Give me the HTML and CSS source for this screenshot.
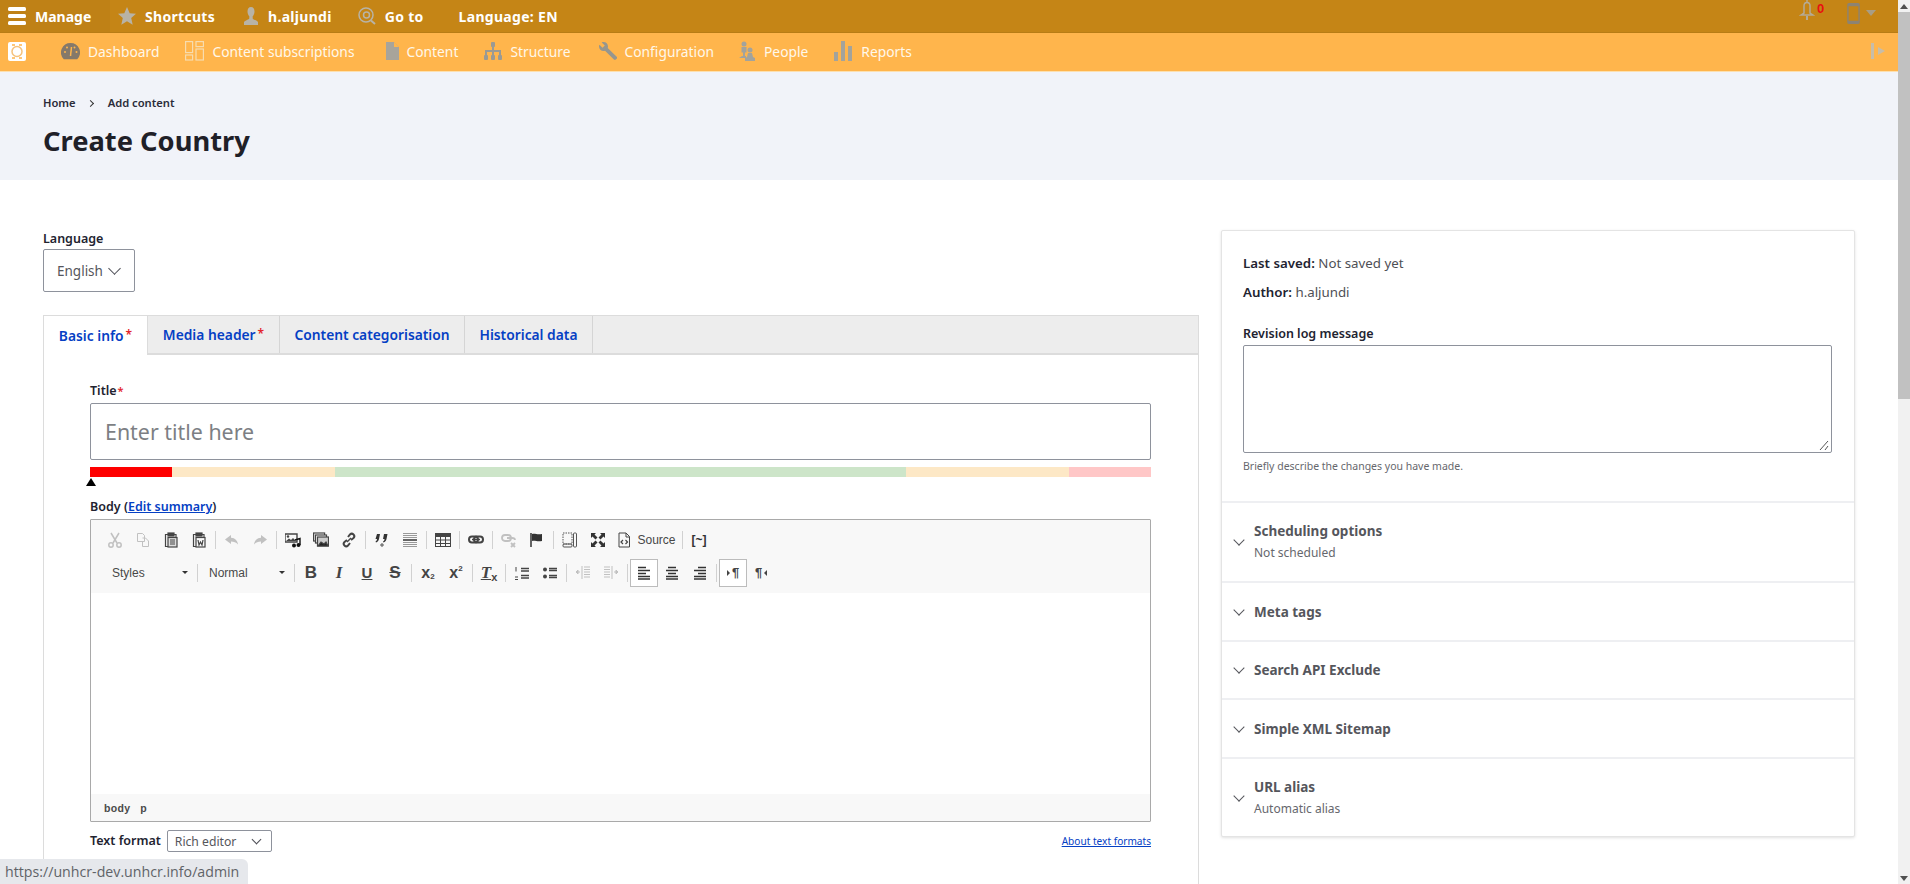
FILE: index.html
```html
<!DOCTYPE html>
<html lang="en">
<head>
    <meta charset="UTF-8">
    <meta name="viewport" content="width=device-width, initial-scale=1.0">
    <title>Create Country</title>
    <link rel="stylesheet" href="styles.css">
</head>
<body>
<div class="page">
    <div class="content">

        <!-- Toolbar superior -->
        <div class="topbar">
            <a class="top-item manage">
                <svg class="top-icon" viewBox="0 0 18 18"><rect y="0" width="18" height="4" rx="1.5" fill="#fff"/><rect y="7" width="18" height="4" rx="1.5" fill="#fff"/><rect y="14" width="18" height="4" rx="1.5" fill="#fff"/></svg>
                <span>Manage</span>
            </a>
            <a class="top-item shortcuts">
                <svg class="top-icon" viewBox="0 0 18 18"><path d="M9 0l2.7 6.2 6.3.6-4.8 4.3 1.5 6.7L9 14.2l-5.700 3.600 1.500-6.700L0 6.800l6.300-.6z" fill="#b8b3a6"/></svg>
                <span>Shortcuts</span>
            </a>
            <a class="top-item user">
                <svg class="top-icon" viewBox="0 0 18 18"><path d="M9 0c2.300 0 3.500 1.900 3.500 4.500 0 2-.9 3.800-1.800 4.800v2.200c0 1 4.300 1.800 5.300 3.500v3H2v-3c1-1.700 5.300-2.500 5.300-3.500V9.300C6.400 8.300 5.500 6.500 5.500 4.500 5.500 1.900 6.700 0 9 0z" fill="#b8b3a6"/></svg>
                <span>h.aljundi</span>
            </a>
            <a class="top-item goto">
                <svg class="top-icon" viewBox="0 0 18 18" fill="none" stroke="#b8b3a6"><circle cx="8" cy="8" r="7" stroke-width="1.500"/><circle cx="8.500" cy="8" r="3" stroke-width="1.500"/><path d="M13 13.500l4 3.500" stroke-width="2"/></svg>
                <span>Go to</span>
            </a>
            <a class="top-item lang"><span>Language: EN</span></a>
            <div class="top-right">
                <span class="bell">
                    <svg viewBox="0 0 16 20" width="16" height="20" fill="none" stroke="#b5ab97" stroke-width="1.500"><path d="M8 0v2.500M5 6c0-2 1-3.500 3-3.500S11 4 11 6v7l3 2H2l3-2z"/><path d="M8 16v4" stroke-width="2"/></svg>
                    <b class="bell-count">0</b>
                </span>
                <span class="device">
                    <svg viewBox="0 0 14 23" width="13" height="23" fill="none" stroke="#8c8373" stroke-width="1.500"><rect x="1" y="1" width="12" height="21" rx="1"/><path d="M1 2.500h12M1 20.500h12" stroke-width="2.500"/></svg>
                    <i class="device-arrow"></i>
                </span>
            </div>
        </div>

        <!-- Menu de administracion -->
        <div class="menubar">
            <span class="logo"><svg viewBox="0 0 18 19" width="18" height="19"><rect width="18" height="19" rx="2" fill="#fff"/><circle cx="9" cy="9.500" r="5" fill="none" stroke="#f5c27c" stroke-width="1.500"/><path d="M4 3h3M11 3h3M4 16h3M11 16h3" stroke="#ffb54c" stroke-width="1.500"/></svg></span>
            <a class="menu-item dash">
                <svg viewBox="0 0 19 18" width="19" height="18"><path d="M9.500 1a9.500 9.500 0 0 0-6.700 16.200h13.400A9.500 9.500 0 0 0 9.500 1z" fill="#85796a"/><path d="M9.500 14l1-9" stroke="#ffb54c" stroke-width="1.500"/><circle cx="4" cy="10" r="1" fill="#ffb54c"/><circle cx="6" cy="5.500" r="1" fill="#ffb54c"/><circle cx="13.500" cy="5.500" r="1" fill="#ffb54c"/><circle cx="15.500" cy="10" r="1" fill="#ffb54c"/></svg>
                <span>Dashboard</span>
            </a>
            <a class="menu-item subs">
                <svg viewBox="0 0 19 20" width="19" height="20" fill="none" stroke="#f7dcae" stroke-width="1.200"><rect x=".6" y=".6" width="7" height="11"/><rect x="11" y=".6" width="7.400" height="5"/><rect x="11" y="8" width="7.400" height="11"/><rect x=".6" y="14" width="7" height="5"/></svg>
                <span>Content subscriptions</span>
            </a>
            <a class="menu-item cont">
                <svg viewBox="0 0 13 18" width="13" height="18"><path d="M0 0h8l5 5v13H0z" fill="#a8a49b"/><path d="M8 0v5h5" fill="#ffb54c"/></svg>
                <span>Content</span>
            </a>
            <a class="menu-item struct">
                <svg viewBox="0 0 18 18" width="18" height="18" fill="#9a9a94"><rect x="7" y="0" width="4" height="5" rx="1"/><rect x="8" y="5" width="2" height="4"/><rect x="1" y="8" width="16" height="2"/><rect x="1" y="10" width="2" height="3"/><rect x="8" y="10" width="2" height="3"/><rect x="15" y="10" width="2" height="3"/><rect x="0" y="13" width="4" height="5" rx="1"/><rect x="7" y="13" width="4" height="5" rx="1"/><rect x="14" y="13" width="4" height="5" rx="1"/></svg>
                <span>Structure</span>
            </a>
            <a class="menu-item conf">
                <svg viewBox="0 0 18 18" width="18" height="18"><path d="M4.500 0c2.600 0 4.500 2 4.500 4.500 0 .6-.1 1-.3 1.500l9 8.800c.5.600.5 1.400 0 1.900l-.9.900c-.5.500-1.300.5-1.900 0L6 8.700c-.5.200-1 .3-1.500.3C2 9 0 7.100 0 4.500c0-.7.100-1.300.4-1.800L3.500 5.800l2.300-2.300L2.700.4C3.200.100 3.800 0 4.500 0z" fill="#96968f"/></svg>
                <span>Configuration</span>
            </a>
            <a class="menu-item ppl">
                <svg viewBox="0 0 18 20" width="18" height="20" fill="#a3a39c"><circle cx="6" cy="3" r="2.500"/><path d="M3.500 6h5v5.500H7V15H5v-3.500H3.500z"/><path d="M4 15h4v2H1z"/><circle cx="12" cy="9" r="2.500"/><path d="M10 12h4l1 4 2 1v3H7v-3l2-1z"/></svg>
                <span>People</span>
            </a>
            <a class="menu-item rep">
                <svg viewBox="0 0 19 20" width="19" height="20" fill="#a3a39c"><rect x="0" y="11" width="4" height="9"/><rect x="7" y="0" width="4" height="20"/><rect x="14" y="5" width="4" height="15"/></svg>
                <span>Reports</span>
            </a>
            <span class="menu-toggle"><svg viewBox="0 0 18 18" width="18" height="18" fill="#c7bda9"><rect x="1" y="1" width="3" height="16"/><path d="M8 5l7 4-7 4z"/></svg></span>
        </div>

        <!-- Cabecera -->
        <div class="head">
            <div class="crumbs"><a>Home</a><span class="crumb-sep"></span><a>Add content</a></div>
            <h1>Create Country</h1>
        </div>

        <div class="layout">
            <div class="main-col">
                <label class="field-label">Language</label>
                <div class="select select-lang">English<i class="chev"></i></div>

                <div class="tabs">
                    <a class="tab active">Basic info<em>*</em></a>
                    <a class="tab">Media header<em>*</em></a>
                    <a class="tab">Content categorisation</a>
                    <a class="tab">Historical data</a>
                </div>
                <div class="panel">
                    <label class="field-label">Title<em>*</em></label>
                    <div class="title-input">Enter title here</div>
                    <div class="meter">
                        <span class="seg seg-red"></span>
                        <span class="seg seg-tan"></span>
                        <span class="seg seg-green"></span>
                        <span class="seg seg-tan"></span>
                        <span class="seg seg-pink"></span>
                        <i class="meter-mark"></i>
                    </div>

                    <label class="field-label body-label">Body (<a>Edit summary</a>)</label>
                    <div class="editor">
                        <div class="cke-top">
                            <div class="cke-row">
                                <span class="btn off"><svg viewBox="0 0 16 16"><circle cx="4" cy="13" r="2.200" fill="none" stroke="#444" stroke-width="1.500"/><circle cx="12" cy="13" r="2.200" fill="none" stroke="#444" stroke-width="1.500"/><path d="M4 1l6 10M12 1L6 11" stroke="#444" stroke-width="1.500"/></svg></span>
                                <span class="btn off"><svg viewBox="0 0 16 16" fill="none" stroke="#444"><path d="M2.500 1.500h5l2 2v6h-7zM7.500 6h3l3 3v5.500h-6V10"/></svg></span>
                                <span class="btn"><svg viewBox="0 0 16 16" fill="none" stroke="#444" stroke-width="1.200"><path d="M5 2.500H2.500v12H5"/><rect x="5" y="5.500" width="9" height="9.500" fill="#ddd"/><rect x="5" y="1" width="6" height="3" fill="#444"/><path d="M7 8h5M7 10h5M7 12h5M11 2.500h2v3"/></svg></span>
                                <span class="btn"><svg viewBox="0 0 16 16" fill="none" stroke="#444" stroke-width="1.200"><path d="M5 2.500H2.500v12H5"/><rect x="5" y="5.500" width="9" height="9.500"/><rect x="5" y="1" width="6" height="3" fill="#444"/><path d="M7 8l1 5 1.500-3 1.500 3 1-5M11 2.500h2v3"/></svg></span>
                                <i class="sep"></i>
                                <span class="btn off"><svg viewBox="0 0 16 16"><path d="M7 3L1 7.500 7 12V9.500c3 0 5 .7 7 3-.5-4-3-6.500-7-6.700z" fill="#444"/></svg></span>
                                <span class="btn off"><svg viewBox="0 0 16 16"><path d="M9 3l6 4.500L9 12V9.500c-3 0-5 .7-7 3 .5-4 3-6.500 7-6.700z" fill="#444"/></svg></span>
                                <i class="sep"></i>
                                <span class="btn"><svg viewBox="0 0 16 16"><path d="M0 2h12v8H0z" fill="none" stroke="#444" stroke-width="1.400"/><circle cx="3" cy="4.500" r="1.200" fill="#444"/><path d="M1 9l3-2.500 2 1.500 2-2 3 3z" fill="#444"/><path d="M10 8l5-1.500v6.500" stroke="#111" stroke-width="1.400" fill="none"/><circle cx="9" cy="13.500" r="2" fill="#111"/><circle cx="13.500" cy="13" r="2" fill="#111"/></svg></span>
                                <span class="btn"><svg viewBox="0 0 16 16" fill="none" stroke="#444" stroke-width="1.200"><rect x=".6" y="1" width="11" height="8"/><rect x="2.500" y="3" width="11" height="8" fill="#f8f8f8"/><rect x="4.500" y="5" width="11" height="9" fill="#ccc"/><path d="M5 14l3-4 3 2 2-2 2 4z" fill="#222"/></svg></span>
                                <span class="btn"><svg viewBox="0 0 16 16" fill="none" stroke="#444" stroke-width="2"><path d="M7 5l2-2.500c1-1 2.500-1 3.500 0s1 2.500 0 3.500L10 8"/><path d="M9 11l-2 2.500c-1 1-2.500 1-3.500 0s-1-2.500 0-3.500L6 8"/><path d="M6 10l4-4" stroke-width="1.500"/></svg></span>
                                <i class="sep"></i>
                                <span class="btn"><svg viewBox="0 0 16 16" fill="#333"><path d="M3 2h3L5 7c-.4 2-1.500 3-3 3.500l-.5-1C2.500 9 3 8 3 7H1.500zM10 2h3.500l-1 5c-.4 2-1.500 3-3 3.500l-.5-1c1-.5 1.500-1.500 1.500-2.500H9z"/><path d="M6 13h4M8 11v4" stroke="#555" fill="none"/></svg></span>
                                <span class="btn"><svg viewBox="0 0 16 16"><path d="M1 1.500h14M1 3.500h14M1 5.500h14" stroke-width="1" stroke="#999"/><path d="M1 8h14" stroke-width="1.500" stroke="#333"/><path d="M1 10.500h14M1 12.500h14M1 14.500h14" stroke-width="1" stroke="#999"/></svg></span>
                                <i class="sep"></i>
                                <span class="btn"><svg viewBox="0 0 16 16" fill="none" stroke="#444"><rect x=".5" y="1.500" width="15" height="13"/><rect x=".5" y="1.500" width="15" height="3" fill="#444"/><path d="M.5 8h15M.5 11.500h15M5.500 4.500v10M10.500 4.500v10"/></svg></span>
                                <i class="sep"></i>
                                <span class="btn"><svg viewBox="0 0 16 16" fill="none" stroke="#444" stroke-width="2"><rect x="1" y="4.500" width="9" height="6" rx="3"/><rect x="6" y="4.500" width="9" height="6" rx="3"/><path d="M4 7.500h8" stroke-width="1.500"/></svg></span>
                                <i class="sep"></i>
                                <span class="btn off"><svg viewBox="0 0 16 16" fill="none" stroke="#444" stroke-width="1.800"><rect x="1" y="3" width="9" height="6" rx="3"/><path d="M6 6h5c2 0 3 1 3 2M10 11l4 4M14 11l-4 4"/></svg></span>
                                <span class="btn"><svg viewBox="0 0 16 16"><path d="M2 1v14" stroke="#333" stroke-width="1.500"/><path d="M3 2c3-1 5 1 10 0v7c-5 1-7-1-10 0z" fill="#333"/></svg></span>
                                <i class="sep"></i>
                                <span class="btn"><svg viewBox="0 0 16 16" fill="none" stroke="#555"><rect x="1" y="1" width="9" height="11" stroke-dasharray="1.500 1"/><rect x="11.500" y="1" width="3" height="14" rx="1"/><rect x="1" y="12" width="9" height="3" rx="1"/></svg></span>
                                <span class="btn"><svg viewBox="0 0 16 16" fill="#333"><path d="M1 1h5L4.500 2.500l3 3-2 2-3-3L1 6zM15 1v5l-1.500-1.500-3 3-2-2 3-3L10 1zM1 15v-5l1.500 1.500 3-3 2 2-3 3L6 15zM15 15h-5l1.500-1.500-3-3 2-2 3 3L15 10z"/></svg></span>
                                <span class="btn btn-source"><svg viewBox="0 0 16 16" fill="none" stroke="#444"><path d="M3 1h7l3.500 3.500V15H3zM10 1v4h3.500"/><path d="M7 8L5 10l2 2M9.500 8l2 2-2 2" stroke-width="1.200"/></svg><span>Source</span></span>
                                <i class="sep"></i>
                                <span class="btn btn-text">[~]</span>
                            </div>
                            <div class="cke-row">
                                <span class="combo combo-styles">Styles<i></i></span>
                                <i class="sep"></i>
                                <span class="combo combo-format">Normal<i></i></span>
                                <i class="sep"></i>
                                <span class="btn btn-glyph g-b">B</span>
                                <span class="btn btn-glyph g-i">I</span>
                                <span class="btn btn-glyph g-u">U</span>
                                <span class="btn btn-glyph g-s">S</span>
                                <i class="sep"></i>
                                <span class="btn btn-glyph g-x">x<sub>2</sub></span>
                                <span class="btn btn-glyph g-x">x<sup>2</sup></span>
                                <i class="sep"></i>
                                <span class="btn btn-glyph g-tx"><u>T</u><sub>x</sub></span>
                                <i class="sep"></i>
                                <span class="btn"><svg viewBox="0 0 16 16" stroke="#444" stroke-width="1.500"><path d="M7 3.500h8M7 6h8M7 10.500h8M7 13h8"/><path d="M2 2v4.500M1 12h3M1 14.500h3" stroke-width="1"/></svg></span>
                                <span class="btn"><svg viewBox="0 0 16 16" stroke="#444" stroke-width="1.500"><circle cx="3" cy="4.500" r="2" fill="#444" stroke="none"/><circle cx="3" cy="11.500" r="2" fill="#444" stroke="none"/><path d="M7 3.500h8M7 5.500h8M7 10.500h8M7 12.500h8"/></svg></span>
                                <i class="sep"></i>
                                <span class="btn off"><svg viewBox="0 0 16 16" stroke="#444"><path d="M9 2h6M9 4.500h6M9 7h6M9 9.500h6M9 12h6M7 1v13M1 7h4"/><path d="M1 7l2-2v4z" fill="#444"/></svg></span>
                                <span class="btn off"><svg viewBox="0 0 16 16" stroke="#444"><path d="M1 2h6M1 4.500h6M1 7h6M1 9.500h6M1 12h6M9 1v13M11 7h4"/><path d="M15 7l-2-2v4z" fill="#444"/></svg></span>
                                <i class="sep"></i>
                                <span class="btn on"><svg viewBox="0 0 16 16" stroke="#333" stroke-width="1.500"><path d="M2 2.500h8M2 5.500h12M2 8.500h8M2 11.500h12M2 14h12"/></svg></span>
                                <span class="btn"><svg viewBox="0 0 16 16" stroke="#333" stroke-width="1.500"><path d="M4 2.500h8M2 5.500h12M4 8.500h8M2 11.500h12M2 14h12"/></svg></span>
                                <span class="btn"><svg viewBox="0 0 16 16" stroke="#333" stroke-width="1.500"><path d="M6 2.500h8M2 5.500h12M6 8.500h8M2 11.500h12M2 14h12"/></svg></span>
                                <i class="sep"></i>
                                <span class="btn on btn-glyph g-para"><b class="mini-r"></b>¶</span>
                                <span class="btn btn-glyph g-para">¶<b class="mini-l"></b></span>
                            </div>
                        </div>
                        <div class="cke-body"></div>
                        <div class="cke-path"><span>body</span><span>p</span></div>
                    </div>

                    <div class="format-row">
                        <div class="format-left">
                            <label class="field-label">Text format</label>
                            <div class="select select-format">Rich editor<i class="chev"></i></div>
                        </div>
                        <a class="format-link">About text formats</a>
                    </div>
                </div>
            </div>

            <div class="side-col">
                <div class="side-top">
                    <p class="meta"><b>Last saved:</b> Not saved yet</p>
                    <p class="meta"><b>Author:</b> h.aljundi</p>
                    <label class="field-label rev-label">Revision log message</label>
                    <div class="rev-box"><svg class="grip" viewBox="0 0 10 10" width="10" height="10" stroke="#555"><path d="M1 10l8-9M6 10l3-4"/></svg></div>
                    <div class="rev-help">Briefly describe the changes you have made.</div>
                </div>
                <div class="side-sec sec-two"><i class="chev"></i><div><h3>Scheduling options</h3><small>Not scheduled</small></div></div>
                <div class="side-sec"><i class="chev"></i><div><h3>Meta tags</h3></div></div>
                <div class="side-sec sec-short"><i class="chev"></i><div><h3>Search API Exclude</h3></div></div>
                <div class="side-sec"><i class="chev"></i><div><h3>Simple XML Sitemap</h3></div></div>
                <div class="side-sec sec-two sec-last"><i class="chev"></i><div><h3>URL alias</h3><small>Automatic alias</small></div></div>
            </div>
        </div>
    </div>

    <!-- Barra de scroll -->
    <div class="scrollbar">
        <i class="sb-up"></i>
        <div class="sb-thumb"></div>
        <i class="sb-down"></i>
    </div>
</div>

<div class="status-tip">https://unhcr-dev.unhcr.info/admin</div>
</body>
</html>
```

FILE: styles.css
```css
* {
    padding: 0;
    margin: 0;
    box-sizing: border-box;
}

html, body {
    height: 884px;
    overflow: hidden;
    background-color: #fff;
    font-family: "Noto Sans", sans-serif;
    color: #222330;
}

.page {
    display: flex;
    height: 884px;
}

.content {
    flex: 1;
    min-width: 0;
    height: 884px;
    overflow: hidden;
}

/* Barra de scroll */
.scrollbar {
    width: 12px;
    background-color: #f1f1f1;
    display: flex;
    flex-direction: column;
    align-items: center;
}

.sb-thumb {
    width: 100%;
    height: 387px;
    margin-top: 3px;
    background-color: #c1c1c1;
    flex: none;
}

.sb-up, .sb-down {
    width: 0;
    height: 0;
    border-left: 4px solid transparent;
    border-right: 4px solid transparent;
}

.sb-up {
    margin-top: 4px;
    border-bottom: 5px solid #505050;
}

.sb-down {
    margin-top: auto;
    margin-bottom: 3px;
    border-top: 5px solid #505050;
}

/* Toolbar superior */
.topbar {
    height: 33px;
    background-color: #c58516;
    border-bottom: 1px solid #b87c14;
    display: flex;
    align-items: center;
    color: #fff;
    font-size: 14px;
    font-weight: 700;
}

.top-item {
    height: 32px;
    display: flex;
    align-items: center;
    gap: 9px;
    letter-spacing: .3px;
}

.top-icon {
    width: 18px;
    height: 18px;
    flex: none;
}

.manage {
    width: 110px;
    padding-left: 8px;
    background-color: #bf8116;
    letter-spacing: 0;
}

.shortcuts { margin-left: 8px; }
.user { margin-left: 27px; gap: 8px; }
.goto { margin-left: 26px; }
.lang { margin-left: 35px; }

.top-right {
    margin-left: auto;
    display: flex;
    align-items: flex-start;
    gap: 32px;
    padding-right: 22px;
    height: 32px;
}

.bell {
    position: relative;
    display: flex;
}

.bell-count {
    position: absolute;
    top: 1px;
    left: 18px;
    color: #e81010;
    font-family: "Liberation Sans", sans-serif;
    font-size: 13px;
    line-height: 15px;
}

.device {
    display: flex;
    align-items: flex-start;
    gap: 6px;
    margin-top: 2px;
}

.device-arrow {
    width: 0;
    height: 0;
    margin-top: 8px;
    border-left: 5px solid transparent;
    border-right: 5px solid transparent;
    border-top: 6px solid #a89d85;
}

/* Menu */
.menubar {
    height: 39px;
    padding-bottom: 2px;
    background-color: #ffb54c;
    border-bottom: 1px solid #fde0b0;
    display: flex;
    align-items: center;
    color: #fff8ea;
    font-size: 13.8px;
}

.logo {
    display: flex;
    margin-left: 8px;
}

.menu-item {
    display: flex;
    align-items: center;
    gap: 8px;
}

.dash { margin-left: 35px; }
.subs { margin-left: 26px; }
.cont { margin-left: 31px; }
.struct { margin-left: 26px; }
.conf { margin-left: 28px; }
.ppl { margin-left: 24px; }
.rep { margin-left: 26px; }

.menu-toggle {
    display: flex;
    margin-left: auto;
    margin-right: 10px;
}

/* Cabecera */
.head {
    height: 108px;
    padding: 23px 43px 0;
    background-color: #f1f3f9;
}

.crumbs {
    display: flex;
    align-items: center;
    font-size: 11.2px;
    font-weight: 600;
    line-height: 16px;
    color: #2b2c3a;
}

.crumb-sep {
    width: 5px;
    height: 5px;
    margin: 0 15px 0 12px;
    border-top: 1px solid #333;
    border-right: 1px solid #333;
    transform: rotate(45deg);
}

h1 {
    margin-top: 10px;
    font-size: 27.3px;
    line-height: 40px;
    font-weight: 700;
    color: #1f2028;
}

/* Columnas */
.layout {
    display: flex;
    align-items: flex-start;
    padding: 50px 0 0 43px;
}

.main-col {
    width: 1156px;
    flex: none;
}

.field-label {
    display: block;
    font-size: 12.5px;
    font-weight: 600;
    line-height: 18px;
    color: #222330;
}

.field-label em {
    font-style: normal;
    font-size: 11px;
    color: #e3242b;
    margin-left: 1px;
}

.select {
    display: flex;
    align-items: center;
    justify-content: space-between;
    background-color: #fff;
    border: 1px solid #8e929c;
    border-radius: 2px;
    color: #55565b;
    font-size: 13.5px;
}

.select-lang {
    width: 92px;
    height: 43px;
    margin-top: 1px;
    padding: 0 15px 0 13px;
}

.chev {
    display: block;
    width: 9px;
    height: 9px;
    margin-top: -4px;
    border-right: 1.4px solid #4c4d55;
    border-bottom: 1.4px solid #4c4d55;
    transform: rotate(45deg);
    flex: none;
}

/* Pestanas */
.tabs {
    display: flex;
    height: 40px;
    margin-top: 23px;
    background-color: #ededed;
    border: 1px solid #dcdcdc;
    border-bottom-width: 2px;
}

.tab {
    display: flex;
    align-items: center;
    justify-content: center;
    height: 37px;
    border-right: 1px solid #d5d5d5;
    color: #0540c4;
    font-size: 13.8px;
    font-weight: 600;
}

.tab em {
    font-style: normal;
    font-size: 12px;
    color: #e3242b;
    margin: -2px 0 0 2px;
}

.tab:nth-child(1) { width: 104px; }
.tab:nth-child(2) { width: 132px; }
.tab:nth-child(3) { width: 185px; }
.tab:nth-child(4) { width: 128px; }

.tab.active {
    height: 39px;
    background-color: #fff;
    border-right: 1px solid #dcdcdc;
}

.panel {
    height: 540px;
    padding: 27px 47px 0 46px;
    border-left: 1px solid #dcdcdc;
    border-right: 1px solid #dcdcdc;
}

.title-input {
    height: 57px;
    margin-top: 3px;
    padding: 0 14px;
    border: 1px solid #8e929c;
    border-radius: 2px;
    color: #7d7f84;
    font-size: 21.4px;
    line-height: 55px;
}

/* Barra de longitud del titulo */
.meter {
    position: relative;
    display: flex;
    height: 10px;
    margin-top: 7px;
}

.seg { height: 10px; }
.seg-red { width: 82px; background-color: #fe0000; }
.seg-tan { width: 163px; background-color: #fde8c6; }
.seg-green { flex: 1; background-color: #cde5c9; }
.seg-pink { width: 82px; background-color: #ffc7c7; }

.meter-mark {
    position: absolute;
    top: 11px;
    left: -4px;
    width: 0;
    height: 0;
    border-left: 5px solid transparent;
    border-right: 5px solid transparent;
    border-bottom: 8px solid #000;
}

.body-label {
    margin-top: 21px;
}

.body-label a {
    color: #0540c4;
    text-decoration: underline;
}

/* Editor */
.editor {
    height: 303px;
    margin-top: 3px;
    display: flex;
    flex-direction: column;
    border: 1px solid #a9a9a9;
    border-radius: 1px;
    font-family: "Liberation Sans", Arial, sans-serif;
}

.cke-top {
    height: 73px;
    padding: 3px 0 0 10px;
    background-color: #f8f8f8;
}

.cke-row {
    display: flex;
    align-items: center;
    height: 33px;
}

.btn {
    display: flex;
    align-items: center;
    justify-content: center;
    width: 28px;
    height: 28px;
    flex: none;
    color: #333;
}

.btn svg {
    width: 16px;
    height: 16px;
    fill-rule: evenodd;
}

.btn.off svg { opacity: .3; }

.btn.on {
    background-color: #fff;
    border: 1px solid #bcbcbc;
}

.btn-source {
    width: 68px;
    gap: 5px;
    font-size: 12px;
    color: #474747;
}

.btn-text {
    font-size: 12px;
    font-weight: 700;
}

.btn-glyph {
    font-size: 17px;
    font-weight: 700;
    line-height: 16px;
    color: #444;
}

.g-i { font-style: italic; font-family: "Liberation Serif", serif; }
.g-u { text-decoration: underline; font-size: 15px; }
.g-s { text-decoration: line-through; }

.btn-glyph sub, .btn-glyph sup {
    font-size: 8px;
    line-height: 8px;
}

.btn-glyph sub { margin-top: 9px; }
.btn-glyph sup { margin-bottom: 7px; }

.g-x {
    font-size: 16px;
}

.g-tx {
    font-style: italic;
    font-family: "Liberation Serif", serif;
}

.g-tx sub {
    font-family: "Liberation Sans", sans-serif;
    font-size: 11px;
    font-style: normal;
}

.g-para {
    font-size: 13px;
}

.mini-r, .mini-l {
    width: 0;
    height: 0;
    border-top: 3px solid transparent;
    border-bottom: 3px solid transparent;
}

.mini-r { border-left: 3px solid #444; margin-right: 2px; }
.mini-l { border-right: 3px solid #444; margin-left: 2px; }

.sep {
    width: 1px;
    height: 18px;
    margin: 0 2px;
    flex: none;
    background-color: #d1d1d1;
}

.combo {
    position: relative;
    display: flex;
    align-items: center;
    height: 24px;
    flex: none;
    padding-left: 11px;
    font-size: 12px;
    color: #484848;
}

.combo i {
    position: absolute;
    top: 10px;
    right: 7px;
    width: 0;
    height: 0;
    border-left: 3px solid transparent;
    border-right: 3px solid transparent;
    border-top: 3px solid #333;
}

.combo-styles { width: 94px; }
.combo-format { width: 92px; padding-left: 9px; }

.cke-body {
    flex: 1;
    background-color: #fff;
}

.cke-path {
    height: 27px;
    display: flex;
    align-items: center;
    gap: 10px;
    padding-left: 13px;
    background-color: #f8f8f8;
    font-size: 10.5px;
    font-weight: 700;
    letter-spacing: .3px;
    color: #4a4a4a;
}

.format-row {
    display: flex;
    align-items: center;
    justify-content: space-between;
    margin-top: 8px;
    height: 22px;
}

.format-left {
    display: flex;
    align-items: center;
    gap: 6px;
}

.select-format {
    width: 105px;
    height: 22px;
    padding: 0 11px 0 7px;
    font-size: 12.2px;
}

.select-format .chev {
    width: 7px;
    height: 7px;
    border-width: 1px;
}

.format-link {
    color: #0540c4;
    font-size: 10.1px;
    text-decoration: underline;
}

/* Columna derecha */
.side-col {
    width: 634px;
    margin-left: 22px;
    flex: none;
    background-color: #fff;
    border: 1px solid #e4e4e4;
    border-radius: 2px;
    box-shadow: 0 1px 3px rgba(0, 0, 0, .12);
}

.side-top {
    height: 270px;
    padding: 22px 22px 0 21px;
}

.meta {
    font-size: 13.3px;
    line-height: 20px;
    margin-bottom: 9px;
    color: #4e4f55;
}

.meta b {
    color: #222330;
    font-weight: 600;
}

.rev-label {
    margin-top: 23px;
}

.rev-box {
    position: relative;
    width: 589px;
    height: 108px;
    margin-top: 2px;
    border: 1px solid #8e929c;
    border-radius: 2px;
}

.grip {
    position: absolute;
    right: 2px;
    bottom: 2px;
}

.rev-help {
    margin-top: 5px;
    font-size: 10.5px;
    line-height: 16px;
    color: #66676d;
}

.side-sec {
    height: 59px;
    display: flex;
    align-items: center;
    gap: 11px;
    padding-left: 12px;
    border-top: 2px solid #eeeff2;
}

.sec-two { height: 80px; }
.sec-short { height: 58px; }
.sec-last { height: 79px; }

.side-sec .chev {
    width: 8px;
    height: 8px;
    margin-left: 1px;
    border-color: #55565c;
    border-width: 1.5px;
}

.side-sec h3 {
    font-size: 13.5px;
    font-weight: 700;
    line-height: 18px;
    color: #55565c;
}

.side-sec small {
    display: block;
    margin-top: 4px;
    font-size: 12px;
    line-height: 18px;
    color: #66676d;
}

/* Tooltip de enlace */
.status-tip {
    position: fixed;
    left: 0;
    bottom: 0;
    width: 248px;
    height: 25px;
    padding-left: 5px;
    background-color: #e6e8ec;
    border-top-right-radius: 6px;
    color: #5f6368;
    font-family: "Open Sans", sans-serif;
    font-size: 14.2px;
    line-height: 25px;
    white-space: nowrap;
}
```
